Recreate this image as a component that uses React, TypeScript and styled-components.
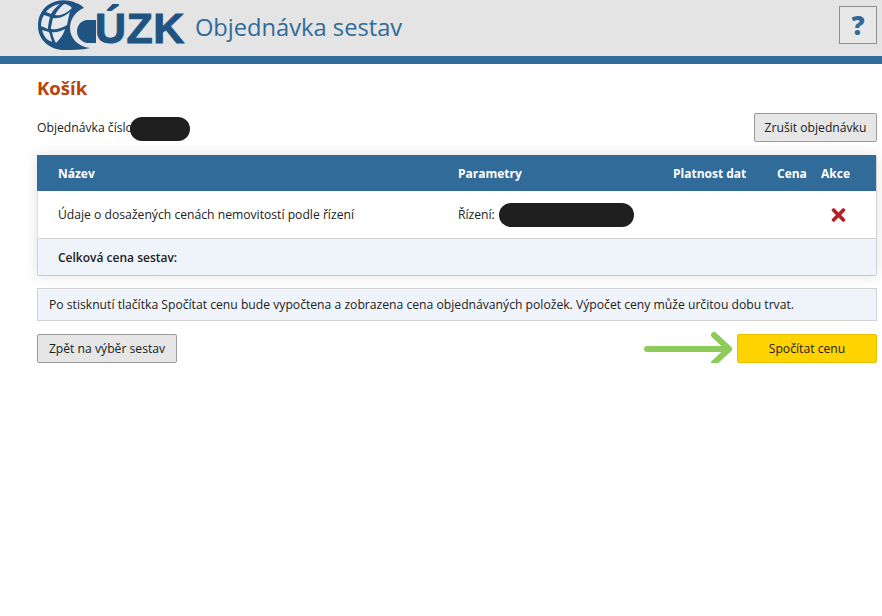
import React from 'react'
import styled, { createGlobalStyle } from 'styled-components'
import { FaTimes } from 'react-icons/fa'

const GlobalStyle = createGlobalStyle`
  html, body {
    margin: 0;
    background: #fff;
    font-family: "Open Sans", "Noto Sans", sans-serif;
    font-size: 12.16px;
    color: #222;
  }
`

const GRID = '400px 215px 104px 44px 1fr'

const App: React.FC = () => {
  return (
    <>
      <GlobalStyle />
      <Header>
        <Brand>
          <GlobeLogo />
          <BrandLetters>ÚZK</BrandLetters>
          <AppTitle>Objednávka sestav</AppTitle>
        </Brand>
        <HelpButton>?</HelpButton>
      </Header>
      <Main>
        <PageTitle>Košík</PageTitle>
        <OrderRow>
          <OrderLabel>
            Objednávka číslo
            <OrderBlot />
          </OrderLabel>
          <Button>Zrušit objednávku</Button>
        </OrderRow>
        <Card>
          <HeadRow>
            <span>Název</span>
            <span>Parametry</span>
            <span>Platnost dat</span>
            <span>Cena</span>
            <span>Akce</span>
          </HeadRow>
          <BodyRow>
            <span>Údaje o dosažených cenách nemovitostí podle řízení</span>
            <ParamCell>
              Řízení:
              <ParamBlot />
            </ParamCell>
            <span />
            <span />
            <RemoveIcon />
          </BodyRow>
          <TotalRow>Celková cena sestav:</TotalRow>
        </Card>
        <InfoBox>
          Po stisknutí tlačítka Spočítat cenu bude vypočtena a zobrazena cena objednávaných položek. Výpočet ceny může určitou dobu trvat.
        </InfoBox>
        <ActionRow>
          <Button $wide>Zpět na výběr sestav</Button>
          <ArrowIcon />
          <PrimaryButton $wide>Spočítat cenu</PrimaryButton>
        </ActionRow>
      </Main>
    </>
  )
}

export default App

const GlobeLogo: React.FC = () => (
  <LogoSvg viewBox="0 0 60 50" aria-hidden="true">
    <path
      d="M38 3 C30 -1 18 -1 10 5 C2 11 0 19 0 26 C0 40 12 50 26 50 C34 50 44 50 52 48 C40 47 32 38 32 28 C32 19 38 11 46 8 C43 5 41 4 38 3 Z"
      fill="#1f5382"
    />
    <g fill="#e4e8ec">
      <path d="M22 4 C16 5 11 8 8 12 L13 14 C15 10 18 7 22 4 Z" />
      <path d="M26 4 C22 7 19 11 17 15 C22 16 28 14 34 8 C32 6 29 4 26 4 Z" />
      <path d="M6 15 C4 18 3 22 3 26 L10 29 C10 25 11 21 12 17 Z" />
      <path d="M15 18 C14 22 13 26 13 29 C18 30 24 28 29 25 C30 20 31 15 32 12 C27 16 21 19 15 18 Z" />
      <path d="M4 30 C5 34 7 38 10 40 L14 42 C13 38 12 35 11 32 Z" />
      <path d="M14 32 C15 36 16 40 18 43 C21 40 25 36 27 29 C23 31 18 33 14 32 Z" />
    </g>
    <path d="M58 20 V43 H49 C43 42 39 37 39 31 C39 25 44 20 49 20 Z" fill="#1f5382" />
  </LogoSvg>
)

const RemoveIcon: React.FC = () => <RemoveGlyph aria-hidden="true" />

const ArrowIcon: React.FC = () => (
  <ArrowSvg viewBox="0 0 90 36" aria-hidden="true">
    <path
      d="M3 18 H85 M70 4 L85 18 L70 32"
      fill="none"
      stroke="#8fcb5b"
      strokeWidth="6"
      strokeLinecap="round"
      strokeLinejoin="round"
    />
  </ArrowSvg>
)

const Header = styled.header`
  display: flex;
  justify-content: space-between;
  align-items: flex-start;
  height: 56px;
  padding: 0 5px 0 38px;
  background: #e4e4e4;
  border-bottom: 8px solid #306b99;
`

const Brand = styled.div`
  display: flex;
  align-items: center;
  height: 50px;
`

const LogoSvg = styled.svg`
  width: 60px;
  height: 50px;
  flex: none;
`

const BrandLetters = styled.span`
  margin-left: -3px;
  margin-top: 6px;
  font-family: "Liberation Sans", Arial, sans-serif;
  font-size: 43px;
  font-weight: 700;
  line-height: 50px;
  letter-spacing: 0.5px;
  color: #1f5382;
  -webkit-text-stroke: 1px #1f5382;
`

const AppTitle = styled.h1`
  margin: 3px 0 0 10px;
  font-size: 23.7px;
  font-weight: 400;
  color: #306b99;
`

const HelpButton = styled.button`
  width: 38px;
  height: 38px;
  margin-top: 6px;
  padding: 0;
  background: #e8e8e8;
  border: 1px solid #8f8f8f;
  font-family: "Open Sans", sans-serif;
  font-size: 26px;
  font-weight: 800;
  color: #306b99;
`

const Main = styled.main`
  padding: 0 5px 0 37px;
`

const PageTitle = styled.h2`
  margin: 0;
  padding-top: 11px;
  font-size: 18.6px;
  line-height: 26px;
  font-weight: 700;
  color: #b8430c;
`

const OrderRow = styled.div`
  display: flex;
  justify-content: space-between;
  align-items: center;
  margin-top: 12px;
`

const OrderLabel = styled.div`
  display: flex;
  align-items: center;
`

const OrderBlot = styled.span`
  width: 60px;
  height: 24px;
  margin: 2px 0 0 -3px;
  background: #1f1f1f;
  border-radius: 12px;
`

const Button = styled.button<{ $wide?: boolean }>`
  height: 29px;
  width: ${(p) => (p.$wide ? '140px' : '123px')};
  padding: 0;
  background: #e6e6e6;
  border: 1px solid #9a9a9a;
  border-radius: 2px;
  font-family: inherit;
  font-size: 12.16px;
  color: #222;
`

const PrimaryButton = styled(Button)`
  background: #ffd300;
  border: 1px solid #e8c000;
`

const Card = styled.section`
  margin-top: 13px;
  border-right: 1px solid #d2d2d2;
  border-bottom: 1px solid #c8c8c8;
  border-radius: 2px;
  box-shadow: 0 0 14px rgba(0, 0, 0, 0.12);
`

const HeadRow = styled.div`
  display: grid;
  grid-template-columns: ${GRID};
  align-items: center;
  height: 36px;
  padding-left: 21px;
  background: #306b99;
  font-size: 12px;
  font-weight: 700;
  color: #fff;
`

const BodyRow = styled.div`
  display: grid;
  grid-template-columns: ${GRID};
  align-items: center;
  height: 47px;
  padding-left: 20px;
  background: #fff;
  border-left: 1px solid #e0e0e0;
  border-bottom: 1px solid #d2d2d2;
`

const ParamCell = styled.div`
  display: flex;
  align-items: center;
`

const ParamBlot = styled.span`
  width: 135px;
  height: 24px;
  margin-left: 4px;
  background: #1f1f1f;
  border-radius: 12px;
`

const RemoveGlyph = styled(FaTimes)`
  width: 15px;
  height: 20px;
  margin-left: 10px;
  color: #b52025;
`

const TotalRow = styled.div`
  display: flex;
  align-items: center;
  height: 36px;
  padding-left: 20px;
  background: #eff3fa;
  border-left: 1px solid #d2d2d2;
  font-size: 12px;
  font-weight: 600;
`

const InfoBox = styled.div`
  display: flex;
  align-items: center;
  height: 31px;
  margin-top: 12px;
  padding-left: 11px;
  background: #eff3fa;
  border: 1px solid #d2d2d2;
`

const ActionRow = styled.div`
  display: flex;
  align-items: center;
  margin-top: 13px;
`

const ArrowSvg = styled.svg`
  width: 90px;
  height: 36px;
  margin: -4px 3px -4px auto;
`
